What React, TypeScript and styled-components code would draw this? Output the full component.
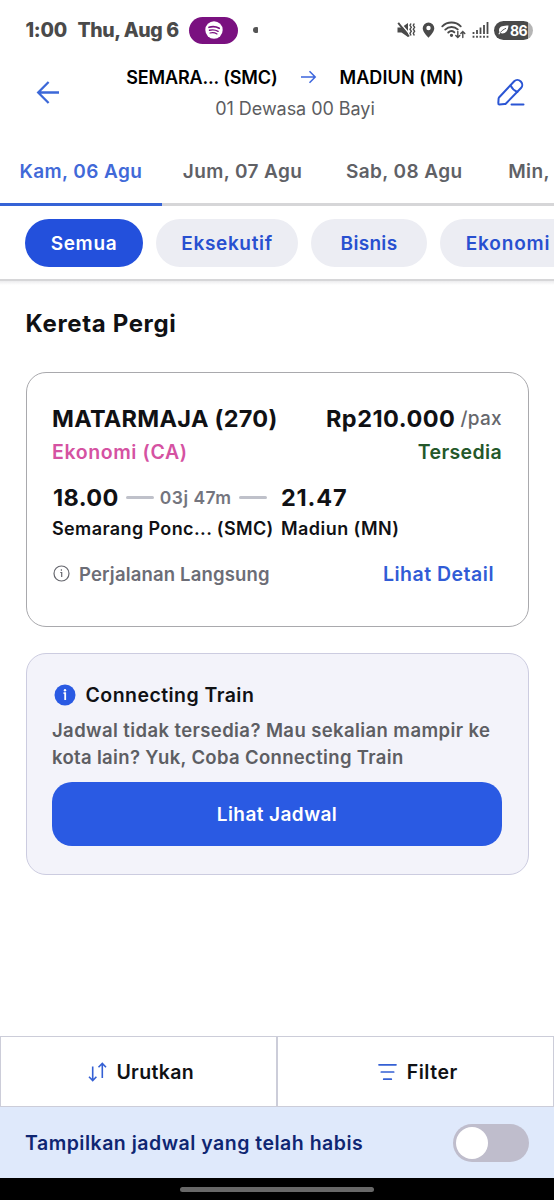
import React from "react";
import styled, { createGlobalStyle } from "styled-components";

const GlobalStyle = createGlobalStyle`
  * { box-sizing: border-box; }
  html, body { margin: 0; padding: 0; background: #fff; }
  body { width: 554px; overflow: hidden; font-family: Inter, "Liberation Sans", sans-serif; color: #101114; }
  button { font: inherit; border: 0; background: none; padding: 0; margin: 0; color: inherit; }
`;

const Screen = styled.div`
  width: 554px;
  height: 1200px;
  display: flex;
  flex-direction: column;
  overflow: hidden;
  background: #fff;
`;

const Label = styled.span<{ $size: number; $color?: string; $weight?: number; $track?: number }>`
  font-size: ${(p) => p.$size}px;
  font-weight: ${(p) => p.$weight ?? 600};
  letter-spacing: ${(p) => p.$track ?? 0}px;
  color: ${(p) => p.$color ?? "#101114"};
  white-space: nowrap;
`;

const StatusBar = styled.div`
  height: 60px;
  flex: none;
  display: flex;
  align-items: center;
  padding: 0 21px 0 25.5px;
`;
const Clock = styled.div`
  display: flex;
  gap: 10.5px;
  width: 163.500px;
`;
const MusicPill = styled.div`
  display: flex;
  align-items: center;
  justify-content: center;
  width: 49px;
  height: 27px;
  border-radius: 14px;
  background: #7a1180;
`;
const Dot = styled.div`
  width: 5px;
  height: 6px;
  margin-left: 15px;
  border-radius: 3px 1px 1px 3px;
  background: #555;
`;
const StatusIcons = styled.div`
  display: flex;
  align-items: center;
  gap: 6px;
  margin-left: auto;
`;
const Battery = styled.div`
  display: flex;
  align-items: center;
  gap: 1px;
  width: 39px;
  height: 19px;
  margin-left: -1px;
  padding-left: 4px;
  border-radius: 10px;
  background: linear-gradient(90deg, #4a4a4a 0 34px, #b5b5b5 34px);
`;

const Header = styled.header`
  height: 78px;
  flex: none;
  display: flex;
  align-items: flex-start;
  padding: 0 28px 0 35px;
`;
const BackButton = styled.button`
  display: flex;
  width: 26px;
  margin-top: 20px;
`;
const EditButton = styled.button`
  display: flex;
  width: 30px;
  margin-top: 17px;
`;
const Trip = styled.div`
  flex: 1;
  display: flex;
  flex-direction: column;
  align-items: center;
  padding: 2px 0 0 33px;
`;
const Route = styled.div`
  display: flex;
  align-items: center;
  height: 30px;
  gap: 22.5px;
`;
const Passengers = styled.div`
  display: flex;
  align-items: center;
  height: 32px;
`;

const Tabs = styled.nav`
  display: flex;
  height: 68px;
  flex: none;
  overflow: hidden;
`;
const Tab = styled.button<{ $active?: boolean }>`
  flex: 0 0 161.7px;
  height: 68px;
  padding-top: 1px;
  border-bottom: ${(p) => (p.$active ? "3px solid #3563d6" : "3px solid #d6d6d8")};
`;

const Chips = styled.div`
  display: flex;
  gap: 13px;
  height: 75px;
  flex: none;
  padding: 13px 0 0 25px;
  overflow: hidden;
  border-bottom: 2px solid #d6d6d8;
`;
const ChipsShadow = styled.div`
  flex: none;
  height: 4px;
  background: linear-gradient(#ececee, #fff);
`;
const Chip = styled.button<{ $width: number; $active?: boolean }>`
  flex: 0 0 ${(p) => p.$width}px;
  height: 48px;
  border-radius: 24px;
  background: ${(p) => (p.$active ? "#2350dc" : "#ecedf3")};
`;

const Content = styled.main`
  flex: 1;
  padding: 0 25.5px;
`;
const SectionTitle = styled.h2`
  margin: 0;
  height: 87px;
  padding-top: 23px;
  line-height: 32px;
  font-size: 0;
`;
const Card = styled.section`
  height: 255px;
  padding: 29px 25.5px 0;
  border: 1.5px solid #a9a9ad;
  border-radius: 20px;
`;
const Row = styled.div<{ $height: number; $top?: number }>`
  display: flex;
  align-items: center;
  justify-content: space-between;
  height: ${(p) => p.$height}px;
  margin-top: ${(p) => p.$top ?? 0}px;
`;
const Price = styled.div`
  display: flex;
  align-items: center;
  gap: 5px;
`;
const Leg = styled.div<{ $height: number; $top: number }>`
  display: grid;
  grid-template-columns: 229px 1fr;
  align-items: center;
  height: ${(p) => p.$height}px;
  margin-top: ${(p) => p.$top}px;
`;
const Departure = styled.div`
  display: flex;
  align-items: center;
  padding-left: 1px;
`;
const Dash = styled.i`
  width: 28px;
  height: 3px;
  margin: 0 6px 0 7px;
  border-radius: 2px;
  background: #bfc1ca;
`;
const Direct = styled.div`
  display: flex;
  align-items: center;
  gap: 9px;
  padding-left: 1px;
`;
const DetailLink = styled.button`
  margin-right: 8px;
`;

const Promo = styled.section`
  height: 222px;
  margin-top: 26px;
  padding: 26px 25.5px 0;
  border: 1.5px solid #cccce0;
  border-radius: 20px;
  background: #f3f3fa;
`;
const PromoTitle = styled.div`
  display: flex;
  align-items: center;
  gap: 10px;
  height: 30px;
  padding-left: 1.5px;
`;
const PromoText = styled.p`
  display: flex;
  flex-direction: column;
  margin: 7px 0 0;
  line-height: 27px;
`;
const PrimaryButton = styled.button`
  width: 100%;
  height: 64px;
  margin-top: 11px;
  border-radius: 20px;
  background: #2a5ae3;
`;

const Actions = styled.div`
  flex: none;
  display: flex;
  height: 71px;
`;
const Action = styled.button`
  flex: 1;
  display: flex;
  align-items: center;
  justify-content: center;
  gap: 9.5px;
  padding-left: 5px;
  border: 1.5px solid #cccdd9;
`;
const SoldOutBar = styled.div`
  flex: none;
  display: flex;
  align-items: center;
  justify-content: space-between;
  height: 71px;
  padding: 1px 25px 0;
  background: #dfe9fb;
`;
const Switch = styled.button`
  display: flex;
  align-items: center;
  width: 76px;
  height: 38px;
  padding-left: 3px;
  border-radius: 19px;
  background: #bfbdcc;
`;
const Knob = styled.span`
  width: 32px;
  height: 32px;
  border-radius: 50%;
  background: #fff;
`;
const NavBar = styled.div`
  flex: none;
  display: flex;
  justify-content: center;
  height: 22px;
  padding-top: 9px;
  background: #000;
`;
const HomeHandle = styled.div`
  width: 194px;
  height: 5px;
  border-radius: 3px;
  background: #686868;
`;

const SpotifyIcon = () => (
  <svg width="18" height="18" viewBox="0 0 18 18">
    <circle cx="9" cy="9" r="8.7" fill="#fff" />
    <g fill="none" stroke="#7a1180" strokeLinecap="round">
      <path d="M4 6.300c3.500-1 7.300-.6 10.200 1" strokeWidth="1.700" />
      <path d="M4.500 9.300c3-.8 6-.5 8.600 1" strokeWidth="1.400" />
      <path d="M5 12c2.500-.6 4.800-.4 7 .9" strokeWidth="1.200" />
    </g>
  </svg>
);
const MuteIcon = () => (
  <svg width="19" height="18" viewBox="0 0 19 18" fill="none" stroke="#4a4a4a">
    <path d="M.5 6.500h4L11 2v14l-6.500-4.500h-4z" fill="#4a4a4a" stroke="none" />
    <path d="M2.800 1.500 13.500 14" stroke="#fff" strokeWidth="1.400" />
    <path d="M1.200 1.800 12 15.500" strokeWidth="1.900" />
    <path d="m14 2.500-1 1.800 1.300 2L13 8.200l1.300 2-1.300 2 1 2.300M17.300 2.500l-1 1.800 1.300 2-1.300 1.900 1.300 2-1.300 2 1 2.300" strokeWidth="1.400" />
  </svg>
);
const PinIcon = () => (
  <svg width="13" height="16" viewBox="0 0 13 16">
    <path d="M6.500.5a5.800 5.800 0 0 0-5.800 5.800c0 4 5.800 9.400 5.800 9.400s5.800-5.400 5.800-9.400A5.800 5.800 0 0 0 6.500.5z" fill="#4a4a4a" />
    <circle cx="6.500" cy="6" r="2.200" fill="#fff" />
  </svg>
);
const WifiIcon = () => (
  <svg width="25" height="18" viewBox="0 0 25 18" fill="none" stroke="#4a4a4a" strokeWidth="1.900" strokeLinecap="round">
    <path d="M1.300 5.300c5-5 13.400-5 18.400 0M4.300 8.600c3.500-3.400 9-3.400 12.400-.2M7.300 11.500c1.800-1.700 4.200-1.700 6-.2" />
    <circle cx="10.500" cy="14.300" r=".7" fill="#4a4a4a" />
    <path d="M16.800 10.500v6m-2-2 2 2 2-2M21.800 16.500v-6m-2 2 2-2 2 2" strokeWidth="1.400" />
  </svg>
);
const SignalIcon = () => (
  <svg width="17" height="18" viewBox="0 0 17 18" stroke="#4a4a4a" strokeWidth="1.800">
    <path d="M1.500 11v2M5 9v4M8.500 6.500V13M12 4v9M15.500 1v12" />
    <path d="M1.500 14.800v2M5 14.800v2M8.500 14.800v2M12 14.800v2M15.500 14.800v2" />
  </svg>
);
const LeafIcon = () => (
  <svg width="11" height="10" viewBox="0 0 11 10">
    <path d="M10.500.5C6 .5 1 1 1 5.200c0 .7.200 1.300.5 1.800L.4 9l.8.5 1.100-1.400C6.500 9.500 10 7 10.500.5z" fill="#fff" />
    <path d="M2.300 7.600C4 5.500 5.500 4.500 8 3.300" stroke="#4a4a4a" strokeWidth=".9" fill="none" />
  </svg>
);
const BackIcon = () => (
  <svg width="26" height="26" viewBox="0 0 26 26" fill="none" stroke="#3c68d8" strokeWidth="2.300">
    <path d="M24 12.500H3M13.600 2 3.200 12.500 13.600 23" />
  </svg>
);
const RouteArrow = () => (
  <svg width="17" height="14" viewBox="0 0 17 14" fill="none" stroke="#3c66dd" strokeWidth="1.500">
    <path d="M1 7h14M9.500 1.300 15.200 7l-5.700 5.700" />
  </svg>
);
const EditIcon = () => (
  <svg width="30" height="30" viewBox="0 0 30 30" fill="none" stroke="#2a55d4" strokeWidth="2" strokeLinejoin="round" strokeLinecap="round">
    <path d="M3 20.500 18.200 4.300a4.500 4.500 0 0 1 6.300 0l.5.500a4.500 4.500 0 0 1 0 6.200L10 26.500a2 2 0 0 1-1.300.6L3.300 27.500a1 1 0 0 1-1-1.100l.3-4.900a2 2 0 0 1 .4-1z" />
    <path d="M14.500 8.400c1.500 3.200 3.700 5.300 6.800 6.600M15.500 27.500h12" />
  </svg>
);
const InfoOutline = () => (
  <svg width="17" height="17" viewBox="0 0 17 17" fill="none" stroke="#66676e" strokeWidth="1.200">
    <circle cx="8.500" cy="8.500" r="7.500" />
    <path d="M7.300 7.500h1.400V12M8.400 4.300v1.500" />
  </svg>
);
const InfoSolid = () => (
  <svg width="22" height="22" viewBox="0 0 22 22">
    <circle cx="11" cy="11" r="10.500" fill="#2a5ae3" />
    <path d="M9.500 9.200h1.700v6.800" stroke="#fff" strokeWidth="1.800" fill="none" />
    <circle cx="11" cy="6.300" r="1.200" fill="#fff" />
  </svg>
);
const SortIcon = () => (
  <svg width="19" height="20" viewBox="0 0 19 20" fill="none" stroke="#3560d4" strokeWidth="1.600">
    <path d="M4.700 4.500v14M1 14.800l3.700 3.700 3.700-3.700M14.300 16V1.500M10.500 5.200l3.800-3.800L18 5.200" />
  </svg>
);
const FilterIcon = () => (
  <svg width="19" height="18" viewBox="0 0 19 18" stroke="#3560d4" strokeWidth="1.700" strokeLinecap="round">
    <path d="M1 1.800h17M3.300 9h12.400M5.700 16.200h7.600" />
  </svg>
);

const days = ["Kam, 06 Agu", "Jum, 07 Agu", "Sab, 08 Agu", "Min, 09 Agu"];
const classes = [
  { name: "Semua", width: 118, track: 0.7 },
  { name: "Eksekutif", width: 142, track: 0.65 },
  { name: "Bisnis", width: 116, track: 0.3 },
  { name: "Ekonomi", width: 136, track: 0.85 },
];

export default function App() {
  return (
    <>
      <GlobalStyle />
      <Screen>
        <StatusBar>
          <Clock>
            <Label $size={19.5} $weight={800} $color="#4a4a4a" $track={-0.25}>1:00</Label>
            <Label $size={19.5} $weight={800} $color="#4a4a4a" $track={-0.4}>Thu, Aug 6</Label>
          </Clock>
          <MusicPill><SpotifyIcon /></MusicPill>
          <Dot />
          <StatusIcons>
            <MuteIcon />
            <PinIcon />
            <WifiIcon />
            <SignalIcon />
            <Battery>
              <LeafIcon />
              <Label $size={14} $weight={700} $color="#fff" $track={-0.6}>86</Label>
            </Battery>
          </StatusIcons>
        </StatusBar>

        <Header>
          <BackButton aria-label="Kembali"><BackIcon /></BackButton>
          <Trip>
            <Route>
              <Label $size={18} $color="#000" $track={-0.15}>SEMARA... (SMC)</Label>
              <RouteArrow />
              <Label $size={18} $color="#000" $track={0.1}>MADIUN (MN)</Label>
            </Route>
            <Passengers>
              <Label $size={18} $weight={400} $color="#5c5d61" $track={-0.05}>01 Dewasa 00 Bayi</Label>
            </Passengers>
          </Trip>
          <EditButton aria-label="Ubah"><EditIcon /></EditButton>
        </Header>

        <Tabs>
          {days.map((day, i) => (
            <Tab key={day} $active={i === 0}>
              <Label $size={19} $track={0.4} $color={i === 0 ? "#4169d8" : "#606166"}>{day}</Label>
            </Tab>
          ))}
        </Tabs>

        <Chips>
          {classes.map((c, i) => (
            <Chip key={c.name} $width={c.width} $active={i === 0}>
              <Label $size={19} $track={c.track} $color={i === 0 ? "#fff" : "#2850d0"}>{c.name}</Label>
            </Chip>
          ))}
        </Chips>
        <ChipsShadow />

        <Content>
          <SectionTitle><Label $size={24} $weight={700} $track={0.65}>Kereta Pergi</Label></SectionTitle>
          <Card>
            <Row $height={32}>
              <Label $size={23.5} $weight={700} $track={0.28}>MATARMAJA (270)</Label>
              <Price>
                <Label $size={23.5} $weight={700} $track={0.5}>Rp210.000</Label>
                <Label $size={19} $weight={500} $color="#66676c" $track={0.3}>/pax</Label>
              </Price>
            </Row>
            <Row $height={28} $top={4}>
              <Label $size={19.5} $color="#d552a2" $track={0.6}>Ekonomi (CA)</Label>
              <Label $size={19.5} $color="#24582a" $track={0.35}>Tersedia</Label>
            </Row>
            <Leg $height={32} $top={15}>
              <Departure>
                <Label $size={23.5} $weight={700} $track={0.4}>18.00</Label>
                <Dash />
                <Label $size={17.5} $color="#74757e" $track={0.5}>03j 47m</Label>
                <Dash />
              </Departure>
              <Label $size={23.5} $weight={700} $track={0.8}>21.47</Label>
            </Leg>
            <Leg $height={24} $top={3.5}>
              <Label $size={18} $track={0.38}>Semarang Ponc... (SMC)</Label>
              <Label $size={18} $track={0.45}>Madiun (MN)</Label>
            </Leg>
            <Row $height={28} $top={19}>
              <Direct>
                <InfoOutline />
                <Label $size={18.5} $color="#6c6d76" $track={0.17}>Perjalanan Langsung</Label>
              </Direct>
              <DetailLink><Label $size={19.5} $color="#315cd6" $track={0.5}>Lihat Detail</Label></DetailLink>
            </Row>
          </Card>

          <Promo>
            <PromoTitle>
              <InfoSolid />
              <Label $size={19.5} $track={0.45}>Connecting Train</Label>
            </PromoTitle>
            <PromoText>
              <Label $size={18.5} $color="#5d5e63" $track={0.4}>Jadwal tidak tersedia? Mau sekalian mampir ke</Label>
              <Label $size={18.5} $color="#5d5e63" $track={0.33}>kota lain? Yuk, Coba Connecting Train</Label>
            </PromoText>
            <PrimaryButton><Label $size={19} $color="#fff" $track={0.42}>Lihat Jadwal</Label></PrimaryButton>
          </Promo>
        </Content>

        <Actions>
          <Action><SortIcon /><Label $size={19.5} $track={0.35}>Urutkan</Label></Action>
          <Action><FilterIcon /><Label $size={19.5} $track={0.55}>Filter</Label></Action>
        </Actions>
        <SoldOutBar>
          <Label $size={19.5} $color="#0f2672" $track={0.5}>Tampilkan jadwal yang telah habis</Label>
          <Switch role="switch" aria-checked={false} aria-label="Tampilkan jadwal habis"><Knob /></Switch>
        </SoldOutBar>
        <NavBar><HomeHandle /></NavBar>
      </Screen>
    </>
  );
}
